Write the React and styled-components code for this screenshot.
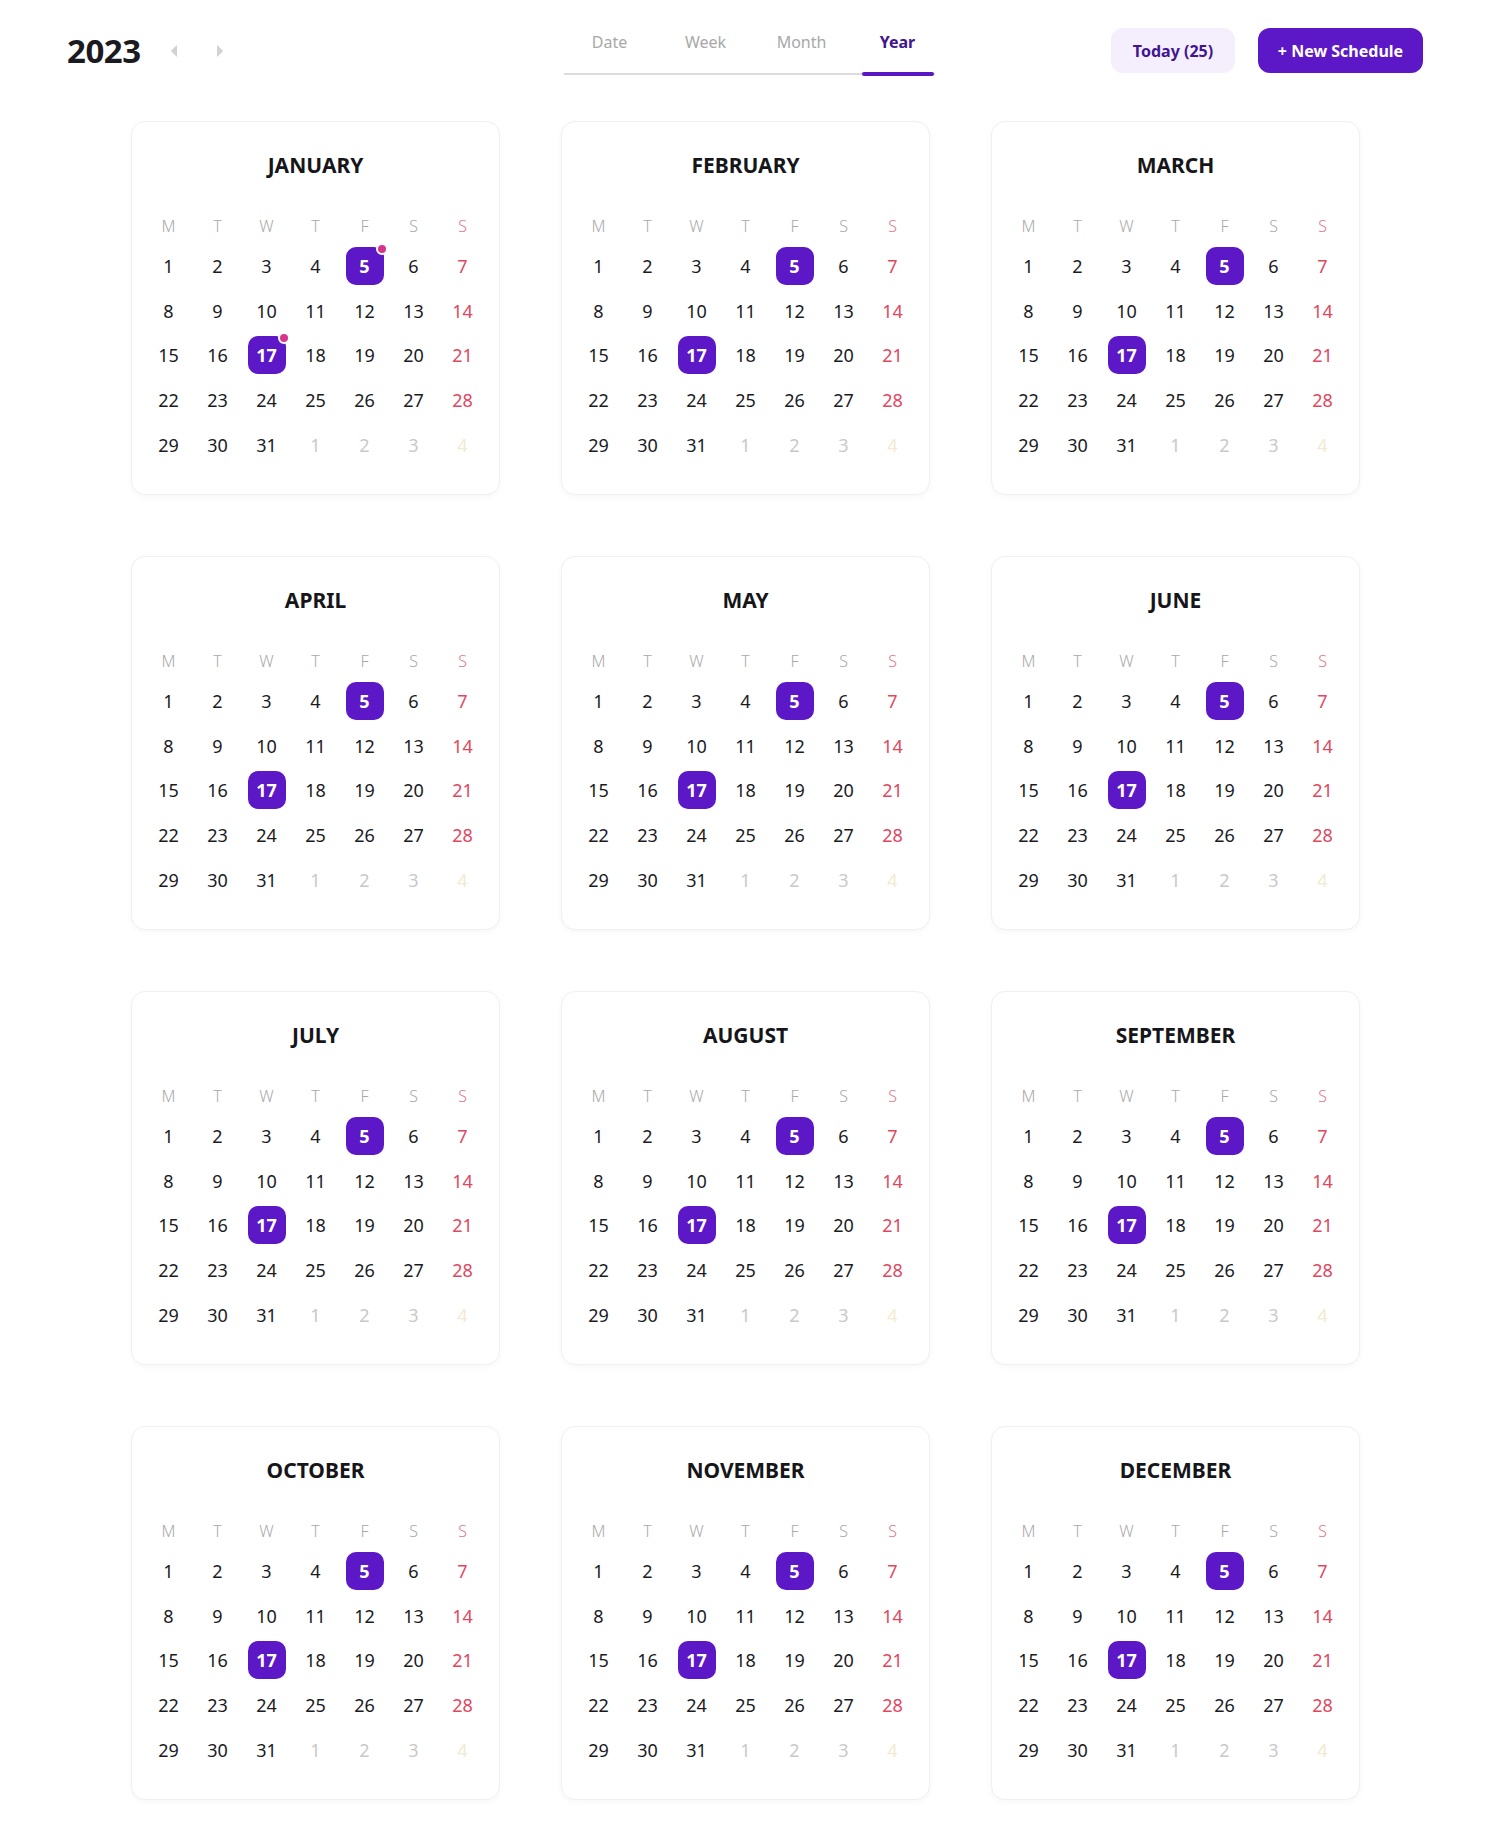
import React from 'react';
import styled, { createGlobalStyle } from 'styled-components';

const GlobalStyle = createGlobalStyle`
  body {
    margin: 0;
    background: #ffffff;
    font-family: "Noto Sans", "Open Sans", sans-serif;
    color: #1b1b1f;
  }
`;

const Page = styled.div`
  width: 1500px;
  min-height: 1839px;
  box-sizing: border-box;
  padding-bottom: 30px;
`;

const Header = styled.header`
  display: grid;
  grid-template-columns: 1fr auto 1fr;
  align-items: start;
  padding: 28px 77px 0 67px;
  height: 73px;
  box-sizing: border-box;
`;

const YearBox = styled.div`
  display: flex;
  align-items: center;
  height: 45px;
`;

const YearTitle = styled.h1`
  margin: 0;
  font-size: 33px;
  font-weight: 700;
  letter-spacing: -0.5px;
  color: #1b1b1f;
  width: 99px;
`;

const ArrowButton = styled.button`
  border: none;
  background: none;
  padding: 0;
  width: 16px;
  height: 20px;
  display: flex;
  align-items: center;
  justify-content: center;
  margin-right: 30px;
  cursor: pointer;
`;

const Tabs = styled.nav`
  display: flex;
  gap: 24px;
  margin-left: 8px;
  padding: 0 1px 0 10px;
  border-bottom: 2px solid #dcdcdc;
`;

const Tab = styled.div`
  position: relative;
  width: 72px;
  height: 45px;
  box-sizing: border-box;
  padding-top: 3px;
  text-align: center;
  font-size: 16px;
  line-height: 22px;
  font-weight: ${p => (p.$active ? 700 : 400)};
  color: ${p => (p.$active ? '#3f1590' : '#a8a8a8')};

  &::after {
    content: '';
    display: ${p => (p.$active ? 'block' : 'none')};
    position: absolute;
    left: 0;
    right: 0;
    bottom: -3px;
    height: 4px;
    border-radius: 2px;
    background: #5a17c2;
  }
`;

const Actions = styled.div`
  display: flex;
  justify-content: flex-end;
  gap: 23px;
`;

const Button = styled.button`
  height: 45px;
  width: ${p => (p.$primary ? '165px' : '124px')};
  padding: 0;
  border-radius: 12px;
  border: none;
  font-family: inherit;
  font-size: 16px;
  font-weight: 700;
  cursor: pointer;
  background: ${p => (p.$primary ? '#5c17c6' : '#f5effd')};
  color: ${p => (p.$primary ? '#ffffff' : '#3f1590')};
`;

const Grid = styled.main`
  display: grid;
  grid-template-columns: repeat(3, 369px);
  column-gap: 61px;
  row-gap: 61px;
  justify-content: center;
  margin-top: 48px;
  padding-right: 9px;
`;

const Card = styled.section`
  box-sizing: border-box;
  height: 374px;
  padding: 28px 12px 0;
  border: 1px solid #f0f0f2;
  border-radius: 14px;
  background: #fff;
  box-shadow: 0 2px 6px rgba(0, 0, 0, 0.035);
`;

const MonthName = styled.h2`
  margin: 0 0 28px;
  text-align: center;
  font-size: 21px;
  line-height: 30px;
  font-weight: 700;
  color: #16161a;
`;

const Days = styled.div`
  display: grid;
  grid-template-columns: repeat(7, 1fr);
  grid-template-rows: 36px repeat(5, 44.6px);
  justify-items: center;
  align-items: center;
`;

const WeekDay = styled.span`
  font-size: 16px;
  font-weight: 300;
  color: ${p => (p.$sunday ? '#e07a8a' : '#a9a9a9')};
`;

const dayColor = p => {
  if (p.$selected) return '#ffffff';
  if (p.$outside) return p.$sunday ? '#f3ead0' : '#c9c9c9';
  if (p.$sunday) return '#e0485f';
  return '#1b1b1f';
};

const Day = styled.span`
  position: relative;
  width: 38px;
  height: 38px;
  display: flex;
  align-items: center;
  justify-content: center;
  border-radius: 10px;
  font-size: 18px;
  font-weight: ${p => (p.$selected ? 700 : 400)};
  background: ${p => (p.$selected ? '#5c17c6' : 'transparent')};
  color: ${dayColor};
`;

const Dot = styled.span`
  position: absolute;
  top: -4px;
  right: -4px;
  width: 8px;
  height: 8px;
  border-radius: 50%;
  background: #d6358e;
  border: 2px solid #fff;
`;

const MONTHS = [
  'JANUARY', 'FEBRUARY', 'MARCH', 'APRIL', 'MAY', 'JUNE',
  'JULY', 'AUGUST', 'SEPTEMBER', 'OCTOBER', 'NOVEMBER', 'DECEMBER',
];
const WEEK = ['M', 'T', 'W', 'T', 'F', 'S', 'S'];

const cells = [
  ...Array.from({ length: 31 }, (_, i) => ({ n: i + 1, outside: false })),
  ...[1, 2, 3, 4].map(n => ({ n, outside: true })),
];

const Arrow = ({ left }) => (
  <svg width="8" height="14" viewBox="0 0 8 14">
    <path
      d={left ? 'M7 1 L1.5 6.2 Q0.8 7 1.5 7.8 L7 13 Z' : 'M1 1 L6.5 6.2 Q7.2 7 6.5 7.8 L1 13 Z'}
      fill="#d2d2d4"
    />
  </svg>
);

const MonthCard = ({ name, dots }) => (
  <Card>
    <MonthName>{name}</MonthName>
    <Days>
      {WEEK.map((w, i) => (
        <WeekDay key={'w' + i} $sunday={i === 6}>{w}</WeekDay>
      ))}
      {cells.map((c, i) => {
        const selected = !c.outside && (c.n === 5 || c.n === 17);
        return (
          <Day
            key={i}
            $selected={selected}
            $outside={c.outside}
            $sunday={i % 7 === 6}
          >
            {c.n}
            {selected && dots && <Dot />}
          </Day>
        );
      })}
    </Days>
  </Card>
);

export default function App() {
  return (
    <Page>
      <GlobalStyle />
      <Header>
        <YearBox>
          <YearTitle>2023</YearTitle>
          <ArrowButton><Arrow left /></ArrowButton>
          <ArrowButton><Arrow /></ArrowButton>
        </YearBox>
        <Tabs>
          <Tab>Date</Tab>
          <Tab>Week</Tab>
          <Tab>Month</Tab>
          <Tab $active>Year</Tab>
        </Tabs>
        <Actions>
          <Button>Today (25)</Button>
          <Button $primary>+ New Schedule</Button>
        </Actions>
      </Header>
      <Grid>
        {MONTHS.map((m, i) => (
          <MonthCard key={m} name={m} dots={i === 0} />
        ))}
      </Grid>
    </Page>
  );
}
